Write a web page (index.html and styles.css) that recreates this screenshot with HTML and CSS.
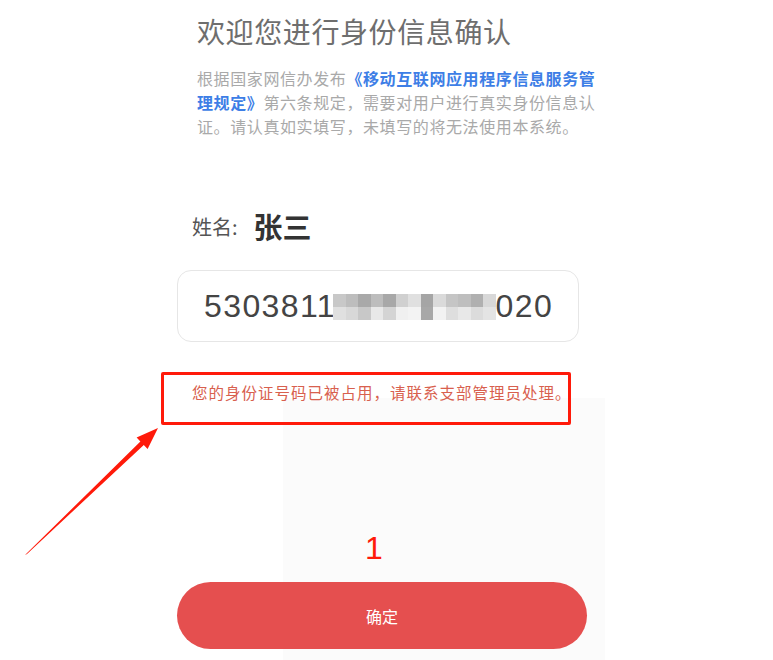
FILE: index.html
```html
<!DOCTYPE html>
<html lang="zh-CN">

<head>
    <meta charset="UTF-8">
    <meta name="viewport" content="width=device-width, initial-scale=1.0">
    <title>身份信息确认</title>

    <!--Style-->

    <link rel="stylesheet" href="styles.css">
</head>

<!--Main Body-->

<body>
    <div class="shade"></div>

    <div class="screen">
        <h1 class="title">欢迎您进行身份信息确认</h1>
        <p class="notice">根据国家网信办发布<span class="law">《移动互联网应用程序信息服务管</span><br><span class="law">理规定》</span>第六条规定，需要对用户进行真实身份信息认<br>证。请认真如实填写，未填写的将无法使用本系统。</p>

        <div class="nameRow">
            <span class="nameLabel">姓名:</span>
            <span class="nameValue">张三</span>
        </div>

        <div class="idCard">
            <span class="idText">5303811</span>
            <div class="mosaic">
                <i style="background:#c8c8c8"></i><i style="background:#bdbdbd"></i><i style="background:#a9a9a9"></i><i style="background:#bdbdbd"></i><i style="background:#a8a8a8"></i><i style="background:#d0d0d0"></i><i style="background:#e0e0e0"></i><i style="background:#a5a5a5"></i><i style="background:#dadada"></i><i style="background:#c5c5c5"></i><i style="background:#bebebe"></i><i style="background:#b0b0b0"></i><i style="background:#d8d8d8"></i>
                <i style="background:#e0e0e0"></i><i style="background:#d8d8d8"></i><i style="background:#c8c8c8"></i><i style="background:#e8e8e8"></i><i style="background:#d4d4d4"></i><i style="background:#f0f0f0"></i><i style="background:#f3f3f3"></i><i style="background:#a8a8a8"></i><i style="background:#f2f2f2"></i><i style="background:#dedede"></i><i style="background:#e8e8e8"></i><i style="background:#dcdcdc"></i><i style="background:#e4e4e4"></i>
            </div>
            <span class="idText">020</span>
        </div>

        <p class="errorText">您的身份证号码已被占用，请联系支部管理员处理。</p>

        <button class="confirmButton">确定</button>
    </div>

    <!--Annotations-->

    <div class="markBox"></div>
    <div class="markNumber">1</div>
    <svg class="markArrow" width="773" height="660" viewBox="0 0 773 660">
        <polygon fill="#ff1a0a"
            points="25,555 140.4,441.4 136.6,437.4 158,428 147.6,449 143.8,445 27,554" />
    </svg>
</body>

</html>
```

FILE: styles.css
```css
body {
    margin: 0;
    background-color: #ffffff;
    font-family: "Noto Sans CJK SC", "Liberation Sans", sans-serif;
}

.screen {
    position: relative;
    padding: 12px 0 0 177px;
    width: 440px;
}

.title {
    margin: 0 0 0 20px;
    font-size: 28px;
    line-height: 38px;
    font-weight: normal;
    color: #6e6e6e;
    letter-spacing: 0.6px;
}

.notice {
    margin: 16px 0 0 20px;
    width: 420px;
    font-size: 16px;
    line-height: 24px;
    color: #a9a9a9;
    letter-spacing: 0.6px;
    white-space: nowrap;
}

.law {
    color: #3d7ee6;
    font-weight: bold;
}

.nameRow {
    display: flex;
    align-items: center;
    margin: 70px 0 0 15px;
    height: 36px;
}

.nameLabel {
    font-size: 20px;
    color: #555555;
    margin-right: 16px;
}

.nameValue {
    font-size: 29px;
    font-weight: bold;
    color: #333333;
}

.idCard {
    display: flex;
    align-items: center;
    margin-top: 26px;
    width: 402px;
    height: 72px;
    border: 1px solid #e6e6e6;
    border-radius: 14px;
    padding-left: 26px;
    box-sizing: border-box;
}

.idText {
    font-family: "Liberation Sans", sans-serif;
    font-size: 32px;
    letter-spacing: 1.4px;
    color: #444444;
}

.mosaic {
    display: grid;
    grid-template-columns: repeat(13, 12.5px);
    grid-template-rows: 13px 13px;
    margin: 2px 0 0 -3px;
}

.mosaic i {
    display: block;
}

.errorText {
    margin: 38px 0 0 15px;
    font-size: 15.5px;
    line-height: 24px;
    color: #d8604e;
    letter-spacing: 1px;
}

.confirmButton {
    display: block;
    margin-top: 178px;
    width: 410px;
    height: 67px;
    border: none;
    border-radius: 34px;
    background-color: #e54f4f;
    color: #ffffff;
    font-family: "Noto Sans CJK SC", sans-serif;
    font-size: 16px;
}

.shade {
    position: absolute;
    left: 283px;
    top: 398px;
    width: 322px;
    height: 262px;
    background-color: #fbfbfb;
}

.markBox {
    position: absolute;
    left: 161px;
    top: 372px;
    width: 404px;
    height: 47px;
    border: 3px solid #ff1a0a;
    border-radius: 2px;
}

.markNumber {
    position: absolute;
    left: 365px;
    top: 528px;
    font-family: "Liberation Sans", sans-serif;
    font-size: 32px;
    line-height: 40px;
    color: #ff1a0a;
}

.markArrow {
    position: absolute;
    left: 0;
    top: 0;
}
```
